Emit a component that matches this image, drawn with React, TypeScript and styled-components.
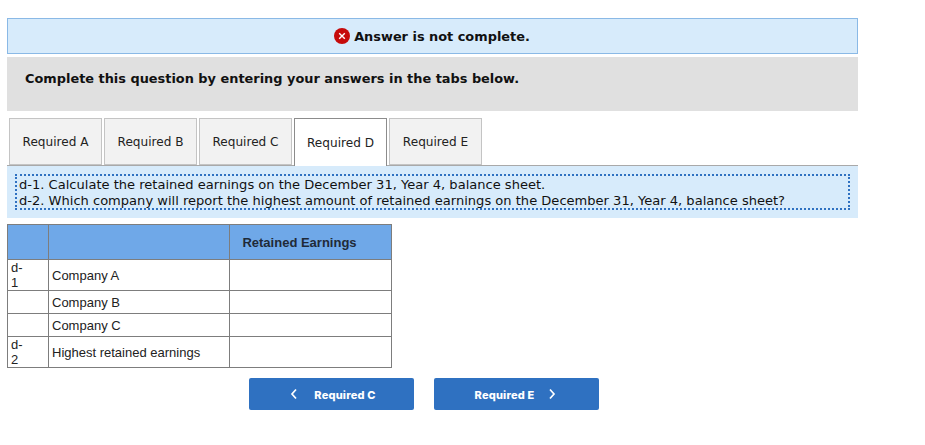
import React from 'react';
import styled, {createGlobalStyle} from "styled-components";

const GlobalStyle = createGlobalStyle`
    html, body {
        margin: 0;
        padding: 0;
        background: #fff;
    }
`

const tabs = ["Required A", "Required B", "Required C", "Required D", "Required E"];

const rows = [
    {tag: ["d-", "1"], label: "Company A", tall: true},
    {tag: [], label: "Company B", tall: false},
    {tag: [], label: "Company C", tall: false},
    {tag: ["d-", "2"], label: "Highest retained earnings", tall: true},
];

export default function App() {
    return (
        <Page>
            <GlobalStyle/>
            <Alert>
                <svg width="16" height="16" viewBox="0 0 16 16">
                    <circle cx="8" cy="8" r="8" fill="#c60b0b"/>
                    <path d="M5.2 5.2l5.6 5.6M10.8 5.2l-5.6 5.6" stroke="#fff" strokeWidth="1.4"/>
                </svg>
                <span>Answer is not complete.</span>
            </Alert>
            <Intro>Complete this question by entering your answers in the tabs below.</Intro>
            <TabBar>
                {tabs.map(t => <Tab key={t} $active={t === "Required D"}>{t}</Tab>)}
            </TabBar>
            <Prompt>
                <Dotted>
                    <div>d-1. Calculate the retained earnings on the December 31, Year 4, balance sheet.</div>
                    <div>d-2. Which company will report the highest amount of retained earnings on the December 31, Year 4, balance sheet?</div>
                </Dotted>
            </Prompt>
            <Table>
                <colgroup>
                    <col width="41"/>
                    <col width="181"/>
                    <col width="162"/>
                </colgroup>
                <thead>
                    <tr>
                        <HeadCell/>
                        <HeadCell/>
                        <RetainedHead>Retained Earnings</RetainedHead>
                    </tr>
                </thead>
                <tbody>
                    {rows.map(r => (
                        <Row key={r.label} $tall={r.tall}>
                            <TagCell>{r.tag.map(part => <div key={part}>{part}</div>)}</TagCell>
                            <LabelCell>{r.label}</LabelCell>
                            <Cell/>
                        </Row>
                    ))}
                </tbody>
            </Table>
            <Nav>
                <PrevButton>
                    <svg width="8" height="12" viewBox="0 0 8 12">
                        <path d="M6 1.5L2 6l4 4.5" fill="none" stroke="#fff" strokeWidth="1.7"/>
                    </svg>
                    <NavLabel>Required C</NavLabel>
                </PrevButton>
                <NextButton>
                    <NavLabel>Required E</NavLabel>
                    <svg width="8" height="12" viewBox="0 0 8 12">
                        <path d="M2 1.5L6 6l-4 4.5" fill="none" stroke="#fff" strokeWidth="1.7"/>
                    </svg>
                </NextButton>
            </Nav>
        </Page>
    );
}

const Page = styled.div`
    width: 851px;
    padding: 18px 0 0 7px;
    font-family: "DejaVu Sans", Verdana, sans-serif;
    color: #111;
`

const Alert = styled.div`
    box-sizing: border-box;
    height: 36px;
    display: flex;
    align-items: center;
    justify-content: center;
    gap: 4px;
    padding-right: 1px;
    background: #d7ebfb;
    border: 1px solid #8ab9e6;
    font-size: 12.9px;
    font-weight: 700;
`

const Intro = styled.div`
    box-sizing: border-box;
    height: 54px;
    margin-top: 3px;
    padding: 14px 18px 0;
    background: #e0e0e0;
    font-size: 12.9px;
    line-height: 16px;
    font-weight: 700;
`

const TabBar = styled.div`
    display: flex;
    gap: 2px;
    margin-top: 7px;
    padding-left: 2px;
    border-bottom: 1px solid #a9a9a9;
    height: 47px;
`

const Tab = styled.div<{ $active?: boolean }>`
    box-sizing: border-box;
    width: 93px;
    height: ${p => p.$active ? "48px" : "47px"};
    padding-top: ${p => p.$active ? "0" : "1px"};
    display: flex;
    align-items: center;
    justify-content: center;
    background: ${p => p.$active ? "#fff" : "#f2f2f2"};
    border: 1px solid ${p => p.$active ? "#8c8c8c" : "#c4c4c4"};
    border-bottom: ${p => p.$active ? "none" : undefined};
    font-size: 12.1px;
    color: #222;
`

const Prompt = styled.div`
    box-sizing: border-box;
    height: 52px;
    padding: 8px 8px 0;
    background: #d7ebfb;
`

const Dotted = styled.div`
    box-sizing: border-box;
    height: 36px;
    padding: 1px 0 0 2px;
    border: 2px dotted #2f71c1;
    font-size: 13.05px;
    line-height: 16px;
    white-space: nowrap;
`

const Table = styled.table`
    width: 384px;
    margin: 6px 0 0 0;
    table-layout: fixed;
    border-collapse: collapse;
    font-family: "Liberation Sans", Arial, sans-serif;
    font-size: 13px;
    color: #222;
`

const HeadCell = styled.th`
    height: 34px;
    padding: 0;
    background: #6fa8e8;
    border: 1px solid #7d7d7d;
    font-size: 13px;
    font-weight: 700;
    color: #1f2a38;
`

const RetainedHead = styled(HeadCell)`
    padding-right: 22px;
`

const Row = styled.tr<{ $tall?: boolean }>`
    height: ${p => p.$tall ? "31px" : "23px"};
`

const Cell = styled.td`
    padding: 0;
    border: 1px solid #7d7d7d;
`

const TagCell = styled(Cell)`
    padding: 0 3px;
    font-size: 13px;
    line-height: 15px;
`

const LabelCell = styled(Cell)`
    padding: 0 3px;
`

const Nav = styled.div`
    display: flex;
    gap: 20px;
    margin: 10px 0 0 242px;
`

const NavButton = styled.div`
    box-sizing: border-box;
    width: 165px;
    height: 32px;
    display: flex;
    align-items: center;
    justify-content: center;
    background: #2f71c1;
    border-radius: 2px;
    color: #fff;
`

const PrevButton = styled(NavButton)`
    gap: 16px;
    padding-left: 3px;
`

const NextButton = styled(NavButton)`
    gap: 14px;
    padding-right: 2px;
`

const NavLabel = styled.span`
    padding-top: 1px;
    font-family: Inter, sans-serif;
    font-size: 11px;
    font-weight: 800;
    letter-spacing: 0.2px;
`
